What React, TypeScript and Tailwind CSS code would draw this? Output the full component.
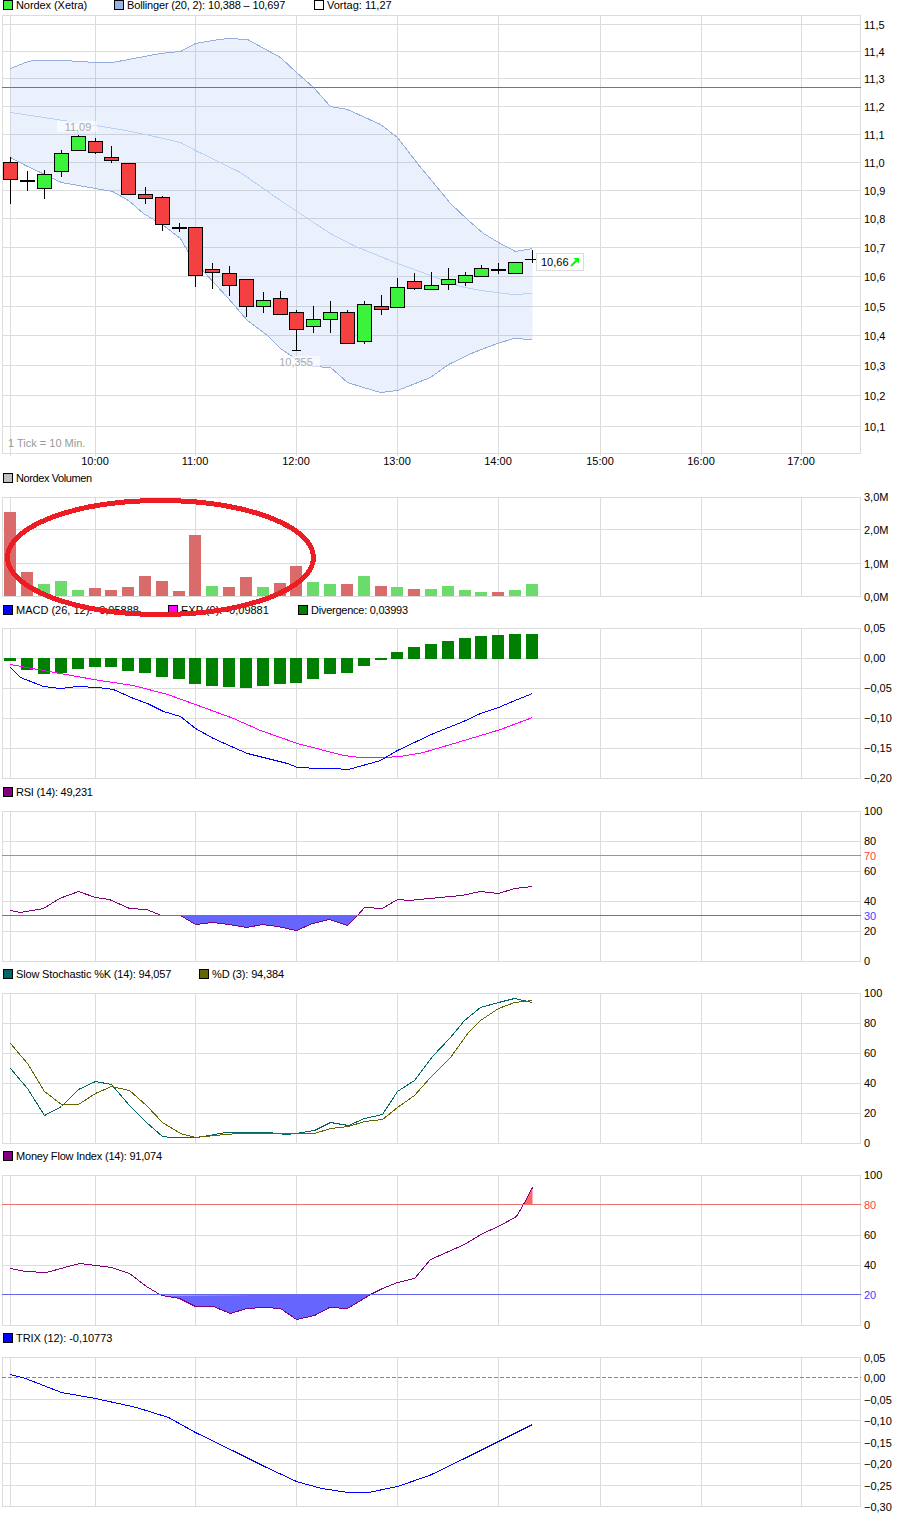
import React from 'react';

type Pt = [number, number];

const GRID = '#dcdcdc';
const V_LINES = [10, 95, 195, 296, 397, 498, 600, 701, 801];

// candle x positions, one per 10 minutes
const XS = [10, 27, 44, 61, 78, 95, 111, 128, 145, 162, 179, 195, 212, 229, 246, 263, 280, 296, 313, 330, 347, 364, 381, 397, 414, 431, 448, 465, 481, 498, 515, 532];

// kind, body top, body bottom, wick top, wick bottom
type Candle = ['r' | 'g' | 'd', number, number, number, number];
const CANDLES: Candle[] = [
  ['r', 162, 179, 157, 204],
  ['d', 180, 182, 171, 191],
  ['g', 174, 188, 170, 199],
  ['g', 153, 171, 150, 177],
  ['g', 136, 150, 135, 150],
  ['r', 141, 152, 138, 154],
  ['r', 157, 160, 146, 163],
  ['r', 163, 194, 163, 194],
  ['r', 194, 198, 187, 204],
  ['r', 197, 224, 196, 231],
  ['d', 227, 229, 223, 232],
  ['r', 227, 275, 227, 287],
  ['r', 269, 272, 263, 289],
  ['r', 273, 285, 266, 296],
  ['r', 279, 306, 279, 317],
  ['g', 300, 306, 292, 313],
  ['r', 298, 314, 291, 314],
  ['r', 312, 329, 310, 350],
  ['g', 319, 326, 306, 333],
  ['g', 312, 319, 301, 333],
  ['r', 312, 343, 310, 343],
  ['g', 304, 341, 301, 344],
  ['r', 306, 309, 295, 315],
  ['g', 287, 307, 278, 308],
  ['r', 281, 288, 273, 290],
  ['g', 285, 289, 272, 289],
  ['g', 279, 284, 268, 290],
  ['g', 275, 282, 272, 286],
  ['g', 268, 276, 265, 276],
  ['d', 269, 271, 263, 274],
  ['g', 262, 273, 262, 273],
];

const BOLL_UP: Pt[] = [[10, 68], [25, 62], [32, 60], [64, 60], [95, 62], [112, 62], [128, 59], [160, 53], [180, 51], [195, 43], [212, 40], [228, 38], [247, 39], [280, 57], [296, 72], [313, 87], [330, 106], [347, 109], [380, 124], [397, 137], [417, 163], [450, 203], [468, 220], [483, 233], [498, 242], [515, 251], [532, 248]];
const BOLL_MID: Pt[] = [[10, 112], [50, 118], [95, 125], [120, 129], [145, 134], [180, 142], [195, 150], [240, 172], [280, 200], [310, 220], [330, 233], [353, 245], [397, 263], [430, 275], [460, 286], [480, 290], [513, 294], [532, 293]];
const BOLL_LOW: Pt[] = [[10, 157], [25, 165], [40, 172], [61, 182], [95, 188], [112, 191], [128, 200], [143, 213], [163, 225], [180, 238], [188, 252], [204, 272], [227, 297], [247, 320], [267, 335], [280, 348], [296, 359], [313, 366], [330, 367], [347, 382], [363, 387], [380, 392], [397, 390], [430, 377], [448, 364], [473, 352], [497, 343], [513, 338], [532, 339]];

// tops of the volume bars, colour follows the candle
const VOLUME: ['r' | 'g', number][] = [['r', 512], ['r', 572], ['g', 584], ['g', 581], ['g', 590], ['r', 588], ['r', 590], ['r', 587], ['r', 576], ['r', 581], ['r', 591], ['r', 535], ['g', 586], ['r', 587], ['r', 577], ['g', 587], ['r', 583], ['r', 566], ['g', 582], ['g', 584], ['r', 584], ['g', 576], ['r', 586], ['g', 587], ['r', 589], ['g', 589], ['g', 586], ['g', 590], ['g', 592], ['r', 592], ['g', 590], ['g', 584]];

// far end of each divergence bar, the other end sits on the 0 line
const DIVERGENCE = [661, 670, 674, 673, 669, 667, 667, 671, 673, 677, 679, 684, 686, 687, 688, 686, 684, 683, 679, 674, 673, 666, 660, 652, 647, 644, 641, 638, 636, 635, 634, 634];

const MACD: Pt[] = [[10, 667], [20, 677], [43, 686], [60, 688], [77, 686], [97, 687], [113, 689], [133, 698], [147, 703], [163, 711], [180, 716], [195, 728], [213, 738], [233, 747], [247, 753], [267, 758], [287, 763], [297, 767], [320, 768], [333, 768], [348, 769], [380, 760], [397, 750], [433, 733], [463, 721], [480, 713], [498, 707], [517, 699], [532, 693]];
const EXP: Pt[] = [[10, 664], [43, 670], [99, 680], [133, 685], [167, 694], [195, 704], [233, 718], [260, 730], [297, 743], [320, 749], [343, 755], [360, 757], [383, 757], [400, 756], [423, 752], [457, 742], [500, 729], [532, 717]];

const RSI: Pt[] = [[10, 910], [20, 912], [32, 910], [43, 908], [59, 898], [78, 891], [95, 897], [109, 899], [129, 908], [146, 909], [161, 915], [180, 915], [195, 924], [212, 922], [229, 924], [246, 927], [262, 924], [277, 926], [296, 930], [312, 923], [329, 919], [347, 925], [357, 915], [364, 907], [382, 908], [397, 899], [409, 900], [429, 898], [461, 895], [480, 891], [498, 893], [514, 888], [532, 886]];

const STOCH_K: Pt[] = [[10, 1068], [27, 1088], [44, 1115], [61, 1106], [78, 1089], [95, 1081], [111, 1084], [129, 1105], [146, 1122], [162, 1136], [171, 1137], [195, 1137], [209, 1135], [225, 1132], [268, 1132], [286, 1134], [296, 1133], [314, 1130], [330, 1122], [348, 1125], [364, 1118], [382, 1114], [397, 1091], [414, 1080], [432, 1056], [450, 1037], [464, 1020], [480, 1007], [498, 1002], [514, 998], [532, 1002]];
const STOCH_D: Pt[] = [[10, 1043], [27, 1063], [44, 1091], [61, 1104], [78, 1104], [95, 1093], [111, 1086], [129, 1090], [146, 1105], [162, 1122], [180, 1133], [195, 1137], [214, 1135], [238, 1133], [268, 1133], [314, 1133], [330, 1128], [348, 1126], [364, 1121], [382, 1119], [397, 1107], [414, 1095], [429, 1078], [450, 1057], [468, 1032], [480, 1020], [498, 1008], [514, 1002], [532, 1000]];

const MFI: Pt[] = [[10, 1268], [25, 1271], [46, 1272], [64, 1267], [79, 1263], [95, 1265], [111, 1267], [129, 1273], [146, 1286], [161, 1295], [179, 1298], [195, 1306], [213, 1306], [230, 1313], [246, 1308], [264, 1307], [280, 1308], [296, 1319], [314, 1315], [329, 1307], [347, 1308], [370, 1294], [382, 1288], [397, 1282], [414, 1278], [430, 1259], [446, 1252], [464, 1244], [482, 1233], [498, 1226], [516, 1216], [523, 1204], [532, 1187]];

const TRIX: Pt[] = [[10, 1374], [25, 1378], [61, 1392], [95, 1398], [136, 1407], [168, 1417], [195, 1432], [236, 1452], [264, 1466], [296, 1481], [321, 1488], [348, 1492], [368, 1492], [397, 1486], [429, 1475], [464, 1458], [498, 1441], [532, 1424]];

const pts = (a: Pt[]) => a.map(([x, y]) => `${x + 0.5},${y + 0.5}`).join(' ');

const Line = ({ data, color }: { data: Pt[]; color: string }) => (
  <polyline points={pts(data)} fill="none" stroke={color} strokeWidth={1} shapeRendering="crispEdges" />
);

const HLine = ({ y, color, dash }: { y: number; color: string; dash?: string }) => (
  <line x1={2} x2={861} y1={y + 0.5} y2={y + 0.5} stroke={color} strokeDasharray={dash} shapeRendering="crispEdges" />
);

interface LegendItem {
  color: string;
  label: string;
  width: string;
  track?: string;
}

const Legend = ({ items, className }: { items: LegendItem[]; className: string }) => (
  <div className={`flex items-start pl-[3px] text-[11px] leading-[12px] text-black whitespace-nowrap ${className}`}>
    {items.map((item) => (
      <div key={item.label} className={`flex items-center ${item.width}`}>
        <span className="w-[10px] h-[10px] mr-[3px] border border-black box-border" style={{ backgroundColor: item.color }} />
        <span className={item.track}>{item.label}</span>
      </div>
    ))}
  </div>
);

interface PlotProps {
  top: number;
  height: number;
  bottom: number;
  lines: number[];
  labels: [number, string, string?][];
  labelShift?: number;
  children?: React.ReactNode;
}

// one chart box with its grid and the value axis on the right
const Plot = ({ top, height, bottom, lines, labels, labelShift = -0.5, children }: PlotProps) => (
  <svg width={907} height={height} viewBox={`0 ${top} 907 ${height}`} className="block overflow-visible text-[11px]">
    <rect x={2.5} y={top + 0.5} width={858} height={bottom - top} fill="#fff" stroke={GRID} shapeRendering="crispEdges" />
    {lines.map((y) => (
      <HLine key={y} y={y} color={GRID} />
    ))}
    {V_LINES.map((x) => (
      <line key={x} x1={x + 0.5} x2={x + 0.5} y1={top} y2={bottom} stroke={GRID} shapeRendering="crispEdges" />
    ))}
    {children}
    {labels.map(([y, text, color]) => (
      <text key={text} x={864} y={y + labelShift} dominantBaseline="central" fill={color ?? '#000'}>
        {text}
      </text>
    ))}
  </svg>
);

const MainChart = () => {
  const band = [...BOLL_UP, ...[...BOLL_LOW].reverse()];
  return (
    <Plot
      top={15}
      height={454}
      bottom={453}
      labelShift={0.5}
      lines={[24, 51, 78, 106, 134, 162, 190, 218, 247, 276, 306, 335, 365, 395, 426]}
      labels={[[24.5, '11,5'], [51.5, '11,4'], [78.5, '11,3'], [106.5, '11,2'], [134.5, '11,1'], [162.5, '11,0'], [190.5, '10,9'], [218.5, '10,8'], [247.5, '10,7'], [276.5, '10,6'], [306.5, '10,5'], [335.5, '10,4'], [365.5, '10,3'], [395.5, '10,2'], [426.5, '10,1']]}
    >
      <polygon points={pts(band)} fill="#4f86e8" fillOpacity={0.12} />
      <Line data={BOLL_UP} color="#96aee0" />
      <Line data={BOLL_MID} color="#b9d0f7" />
      <Line data={BOLL_LOW} color="#96aee0" />
      <HLine y={87} color="#777777" />

      {V_LINES.map((x) => (
        <line key={x} x1={x + 0.5} x2={x + 0.5} y1={453} y2={456} stroke={GRID} shapeRendering="crispEdges" />
      ))}

      <g shapeRendering="crispEdges">
        {CANDLES.map(([kind, top, bot, wickTop, wickBot], i) => {
          const x = XS[i];
          if (kind === 'd') {
            return (
              <g key={x}>
                <line x1={x + 0.5} x2={x + 0.5} y1={wickTop} y2={wickBot} stroke="#000" />
                <rect x={x - 7} y={top} width={15} height={bot - top} fill="#000" />
              </g>
            );
          }
          return (
            <g key={x}>
              <line x1={x + 0.5} x2={x + 0.5} y1={wickTop} y2={wickBot} stroke="#000" />
              <rect x={x - 6.5} y={top + 0.5} width={14} height={bot - top} fill={kind === 'r' ? '#f44040' : '#3af33a'} stroke="#000" />
            </g>
          );
        })}
        {/* low tick of the 12:00 candle and the running last candle */}
        <line x1={292} x2={301} y1={350.5} y2={350.5} stroke="#000" />
        <line x1={525} x2={537} y1={259.5} y2={259.5} stroke="#000" />
        <line x1={532.5} x2={532.5} y1={250} y2={263} stroke="#000" />
      </g>

      <rect x={57} y={121} width={40} height={11} fill="#fff" fillOpacity={0.6} />
      <text x={78} y={127} textAnchor="middle" dominantBaseline="central" fill="#aaaaaa">11,09</text>
      <rect x={280} y={356} width={40} height={11} fill="#fff" fillOpacity={0.6} />
      <text x={296} y={362} textAnchor="middle" dominantBaseline="central" fill="#aaaaaa">10,355</text>
      <text x={8} y={443} dominantBaseline="central" fill="#999999">1 Tick = 10 Min.</text>

      <rect x={536.5} y={253.5} width={47} height={17} fill="#fff" stroke={GRID} shapeRendering="crispEdges" />
      <text x={541} y={262} dominantBaseline="central" fill="#000">10,66</text>
      <line x1={571} y1={266} x2={577} y2={260} stroke="#00ff00" strokeWidth={2} />
      <polygon points="573.5,258 579,258 579,263.5" fill="#00ff00" />

      {[[95, '10:00'], [195, '11:00'], [296, '12:00'], [397, '13:00'], [498, '14:00'], [600, '15:00'], [701, '16:00'], [801, '17:00']].map(([x, t]) => (
        <text key={t} x={x} y={461} textAnchor="middle" dominantBaseline="central" fill="#000">{t}</text>
      ))}
    </Plot>
  );
};

const App = () => (
  <div className="relative w-[907px] h-[1517px] bg-white overflow-hidden font-['Liberation_Sans',sans-serif]">
    <Legend
      className="h-[16px] -mt-px"
      items={[
        { color: '#3af33a', label: 'Nordex (Xetra)', width: 'w-[111px]', track: 'tracking-[-0.07px]' },
        { color: '#9ab2e2', label: 'Bollinger (20, 2): 10,388 – 10,697', width: 'w-[200px]', track: 'tracking-[-0.15px]' },
        { color: '#ffffff', label: 'Vortag: 11,27', width: 'w-[120px]' },
      ]}
    />
    <MainChart />

    <Legend
      className="h-[25px] mt-[3px]"
      items={[{ color: '#c0c0c0', label: 'Nordex Volumen', width: 'w-[200px]', track: 'tracking-[-0.4px]' }]}
    />
    <Plot
      top={497}
      height={100}
      bottom={596}
      labelShift={0.5}
      lines={[529, 563]}
      labels={[[496.5, '3,0M'], [529.5, '2,0M'], [563.5, '1,0M'], [596.5, '0,0M']]}
    >
      <g shapeRendering="crispEdges">
        {VOLUME.map(([kind, y], i) => (
          <rect key={XS[i]} x={XS[i] - 6} y={y} width={12} height={596 - y} fill={kind === 'r' ? '#d96b6b' : '#6bdb6b'} />
        ))}
      </g>
    </Plot>

    <Legend
      className="h-[24px] mt-[7px]"
      items={[
        { color: '#0000ff', label: 'MACD (26, 12): -0,05888', width: 'w-[165px]' },
        { color: '#ff00ff', label: 'EXP (9): -0,09881', width: 'w-[130px]' },
        { color: '#008000', label: 'Divergence: 0,03993', width: 'w-[200px]', track: 'tracking-[-0.25px]' },
      ]}
    />
    <Plot
      top={628}
      height={151}
      bottom={778}
      lines={[658, 688, 718, 748]}
      labels={[[628, '0,05'], [658, '0,00'], [688, '−0,05'], [718, '−0,10'], [748, '−0,15'], [778, '−0,20']]}
    >
      <g shapeRendering="crispEdges">
        {DIVERGENCE.map((y, i) => (
          <rect key={XS[i]} x={XS[i] - 6} y={Math.min(y, 658)} width={12} height={y > 658 ? y - 658 : 659 - y} fill="#008000" />
        ))}
      </g>
      <Line data={EXP} color="#ff00ff" />
      <Line data={MACD} color="#0000ff" />
    </Plot>

    <Legend
      className="h-[25px] mt-[7px]"
      items={[{ color: '#800080', label: 'RSI (14): 49,231', width: 'w-[200px]', track: 'tracking-[-0.25px]' }]}
    />
    <Plot
      top={811}
      height={151}
      bottom={961}
      lines={[841, 871, 901, 931]}
      labels={[[811, '100'], [841, '80'], [856, '70', '#ff4040'], [871, '60'], [901, '40'], [916, '30', '#4040ff'], [931, '20'], [961, '0']]}
    >
      <polygon points={pts(RSI.filter(([x]) => x >= 180 && x <= 357))} fill="#6666ff" />
      <Line data={RSI} color="#800080" />
      <HLine y={855} color="#f07070" />
      <HLine y={915} color="#6666ee" />
    </Plot>

    <Legend
      className="h-[25px] mt-[6px]"
      items={[
        { color: '#006666', label: 'Slow Stochastic %K (14): 94,057', width: 'w-[196px]', track: 'tracking-[-0.16px]' },
        { color: '#666600', label: '%D (3): 94,384', width: 'w-[200px]', track: 'tracking-[-0.15px]' },
      ]}
    />
    <Plot
      top={993}
      height={151}
      bottom={1143}
      lines={[1023, 1053, 1083, 1113]}
      labels={[[993, '100'], [1023, '80'], [1053, '60'], [1083, '40'], [1113, '20'], [1143, '0']]}
    >
      <Line data={STOCH_K} color="#006666" />
      <Line data={STOCH_D} color="#666600" />
    </Plot>

    <Legend
      className="h-[25px] mt-[6px]"
      items={[{ color: '#800080', label: 'Money Flow Index (14): 91,074', width: 'w-[300px]', track: 'tracking-[-0.2px]' }]}
    />
    <Plot
      top={1175}
      height={151}
      bottom={1325}
      lines={[1235, 1265]}
      labels={[[1175, '100'], [1205, '80', '#ff4040'], [1235, '60'], [1265, '40'], [1295, '20', '#4040ff'], [1325, '0']]}
    >
      <polygon points={pts(MFI.filter(([x]) => x >= 161 && x <= 370))} fill="#6666ff" />
      <polygon points="523.5,1204.5 532.5,1187.5 532.5,1204.5" fill="#ff6666" />
      <Line data={MFI} color="#800080" />
      <HLine y={1204} color="#f07070" />
      <HLine y={1294} color="#6666ee" />
    </Plot>

    <Legend
      className="h-[25px] mt-[6px]"
      items={[{ color: '#0000ff', label: 'TRIX (12): -0,10773', width: 'w-[300px]', track: 'tracking-[-0.05px]' }]}
    />
    <Plot
      top={1357}
      height={150}
      bottom={1506}
      labelShift={0.5}
      lines={[1399, 1420, 1442, 1463, 1485]}
      labels={[[1357, '0,05'], [1377, '0,00'], [1399, '−0,05'], [1420, '−0,10'], [1442, '−0,15'], [1463, '−0,20'], [1485, '−0,25'], [1506, '−0,30']]}
    >
      <HLine y={1377} color="#888888" dash="4 2" />
      <Line data={TRIX} color="#0000ff" />
    </Plot>

    {/* hand drawn marker over the volume panel */}
    <svg width={316} height={123} className="absolute left-[3px] top-[496px] pointer-events-none" shapeRendering="crispEdges">
      <ellipse cx={157.5} cy={61.5} rx={153} ry={57} fill="none" stroke="#ed1c24" strokeWidth={5} />
    </svg>
  </div>
);

export default App;
